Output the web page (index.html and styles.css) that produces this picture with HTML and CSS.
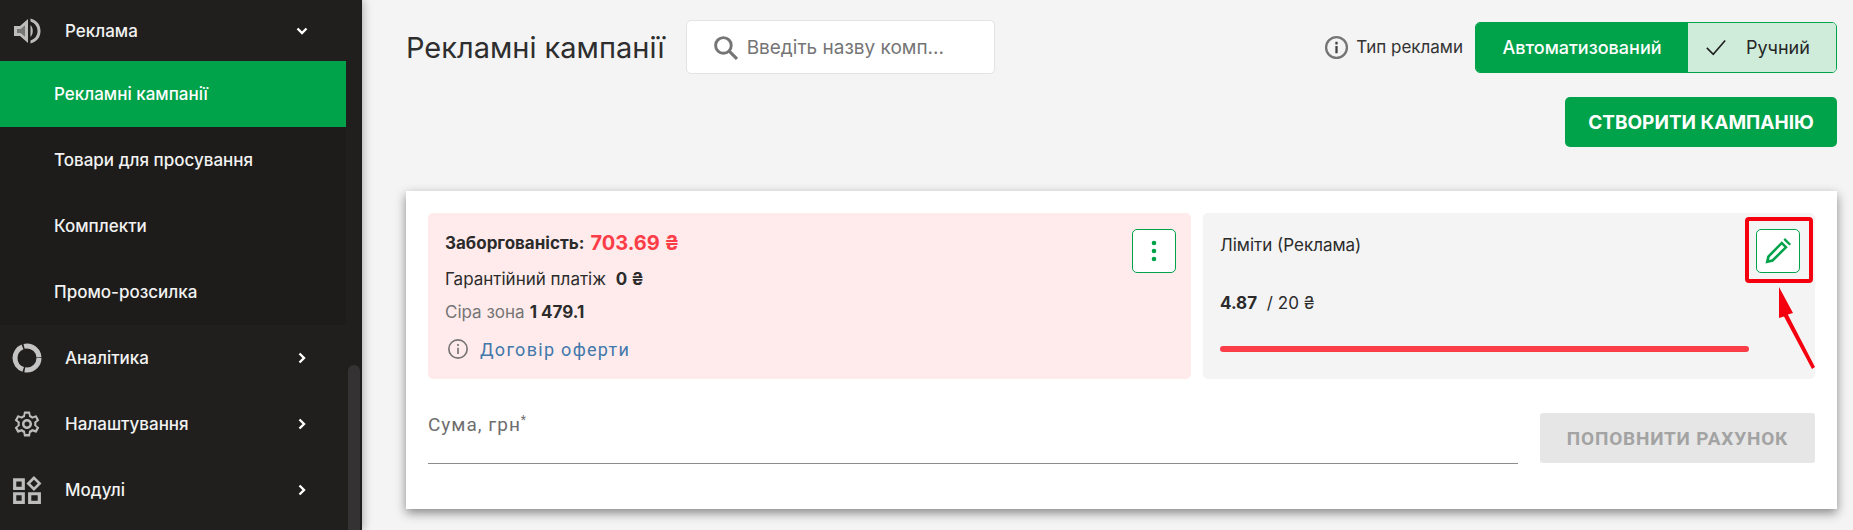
FILE: index.html
```html
<!DOCTYPE html>
<html lang="uk">
<head>
<meta charset="utf-8">
<title>Рекламні кампанії</title>
<link rel="stylesheet" href="styles.css">
</head>
<body>
<div class="page">
  <aside class="sidebar">
    <div class="side-menu">
      <div class="nav-row nav-top">
        <svg class="nav-icon" viewBox="0 0 30 30"><path d="M2 10h6l8-7v24l-8-7H2z M5 13v4h4l4 3.500V9.500L9 13z" fill="#bdbdbd" fill-rule="evenodd"/><path d="M5 13h4l4-3.500v11L9 17H5z" fill="#bdbdbd" opacity=".55"/><path d="M18.500 9c3 3 3 9 0 12z" fill="#bdbdbd"/><path d="M18.500 2.500c8 2 10 8 10 12.500s-2 10.500-10 12.500v-3c4.500-1.500 7-5 7-9.500s-2.500-8-7-9.500z" fill="#bdbdbd"/></svg>
        <span class="nav-label">Реклама</span>
        <svg class="nav-caret" viewBox="0 0 14 14"><path d="M2.500 4.500L7 9l4.500-4.500" fill="none" stroke="#fff" stroke-width="2.400"/></svg>
      </div>
      <div class="sub-menu">
        <div class="sub-row sub-active">Рекламні кампанії</div>
        <div class="sub-row">Товари для просування</div>
        <div class="sub-row">Комплекти</div>
        <div class="sub-row">Промо-розсилка</div>
      </div>
      <div class="nav-row">
        <svg class="nav-icon" viewBox="0 0 30 30"><circle cx="15" cy="15" r="12" fill="none" stroke="#c4c4c4" stroke-width="5" stroke-dasharray="21 1.600 29 1.600 21 1.600"/></svg>
        <span class="nav-label">Аналітика</span>
        <svg class="nav-caret" viewBox="0 0 14 14"><path d="M4.500 2.500L9 7l-4.500 4.500" fill="none" stroke="#fff" stroke-width="2.400"/></svg>
      </div>
      <div class="nav-row">
        <svg class="nav-icon" viewBox="0 0 24 24"><path fill="#bdbdbd" d="M19.430 12.980c.04-.32.070-.640.070-.980s-.030-.660-.070-.980l2.110-1.650c.190-.150.240-.420.120-.640l-2-3.460c-.120-.220-.390-.300-.610-.220l-2.490 1c-.520-.400-1.080-.730-1.690-.980l-.380-2.650C14.460 2.180 14.250 2 14 2h-4c-.250 0-.460.180-.490.420l-.380 2.650c-.610.250-1.170.590-1.690.980l-2.490-1c-.230-.090-.490 0-.610.220l-2 3.460c-.130.220-.070.490.120.640l2.110 1.650c-.040.320-.070.650-.070.980s.030.660.070.980l-2.110 1.650c-.190.150-.240.420-.120.640l2 3.460c.120.220.390.300.610.220l2.490-1c.520.400 1.080.730 1.690.980l.380 2.650c.030.240.240.420.490.420h4c.250 0 .460-.180.490-.420l.380-2.650c.610-.250 1.170-.590 1.690-.980l2.490 1c.230.090.490 0 .610-.220l2-3.460c.120-.220.070-.490-.120-.640l-2.110-1.650zM12 20l-1.200-.100-.500-2.600c-.900-.250-1.700-.700-2.400-1.400l-2.500.900-1.100-1.900 2-1.700c-.200-.900-.200-1.900 0-2.800l-2-1.700 1.100-1.900 2.500.900c.700-.700 1.500-1.150 2.400-1.400l.500-2.600h2.400l.500 2.600c.900.250 1.700.700 2.400 1.400l2.500-.900 1.100 1.900-2 1.700c.200.900.200 1.900 0 2.800l2 1.700-1.100 1.900-2.500-.900c-.700.700-1.500 1.150-2.400 1.400l-.500 2.600zM12 8c-2.200 0-4 1.800-4 4s1.800 4 4 4 4-1.800 4-4-1.800-4-4-4zm0 6c-1.100 0-2-.900-2-2s.900-2 2-2 2 .900 2 2-.900 2-2 2z"/></svg>
        <span class="nav-label">Налаштування</span>
        <svg class="nav-caret" viewBox="0 0 14 14"><path d="M4.500 2.500L9 7l-4.500 4.500" fill="none" stroke="#fff" stroke-width="2.400"/></svg>
      </div>
      <div class="nav-row">
        <svg class="nav-icon" viewBox="0 0 28 28"><path fill="#bdbdbd" fill-rule="evenodd" d="M1 3h11v11H1z M4 6v5h5V6z M1 16h11v11H1z M4 19v5h5v-5z M15 16h12v11H15z M18 19v5h6v-5z M20.500 1l7 7-7 7-7-7z M20.500 4.500L17 8l3.500 3.500L24 8z"/></svg>
        <span class="nav-label">Модулі</span>
        <svg class="nav-caret" viewBox="0 0 14 14"><path d="M4.500 2.500L9 7l-4.500 4.500" fill="none" stroke="#fff" stroke-width="2.400"/></svg>
      </div>
    </div>
    <div class="scroll-track"><div class="scroll-thumb"></div></div>
  </aside>
  <main class="main">
    <header class="head">
      <h1 class="title">Рекламні кампанії</h1>
      <div class="search">
        <svg class="search-icon" viewBox="0 0 24 24"><circle cx="10" cy="10" r="7.500" fill="none" stroke="#757575" stroke-width="2.800"/><path d="M15.500 15.500L23 23" stroke="#757575" stroke-width="3" fill="none"/></svg>
        <span class="search-text">Введіть назву комп...</span>
      </div>
      <div class="type">
        <svg class="info info-big" viewBox="0 0 24 24"><circle cx="12" cy="12" r="10" fill="none" stroke="#757575" stroke-width="2.200"/><path d="M12 10.500v7M12 6.500v2.500" stroke="#424242" stroke-width="2.200" fill="none"/></svg>
        <span class="type-text">Тип реклами</span>
      </div>
      <div class="toggle">
        <div class="toggle-on">Автоматизований</div>
        <div class="toggle-off">
          <svg class="check" viewBox="0 0 24 24"><path d="M2 13l7 7L22 5" fill="none" stroke="#212121" stroke-width="1.800"/></svg>
          <span>Ручний</span>
        </div>
      </div>
    </header>
    <div class="create-row"><button class="create">СТВОРИТИ КАМПАНІЮ</button></div>
    <section class="card">
      <div class="boxes">
        <div class="box box-red">
          <div class="box-lines">
            <div class="line line-debt"><b>Заборгованість:</b> <b class="debt">703.69 ₴</b></div>
            <div class="line line-guar">Гарантійний платіж <b>0 ₴</b></div>
            <div class="line line-gray"><span class="muted">Сіра зона</span> <b>1 479.1</b></div>
            <div class="line line-link">
              <svg class="info info-small" viewBox="0 0 24 24"><circle cx="12" cy="12" r="10" fill="none" stroke="#757575" stroke-width="1.800"/><path d="M12 10.500v7M12 6.500v2.200" stroke="#757575" stroke-width="1.800" fill="none"/></svg>
              <span class="link">Договір оферти</span>
            </div>
          </div>
          <div class="icon-btn">
            <svg class="dots" viewBox="0 0 6 22"><circle cx="3" cy="3" r="2.300" fill="#00a24a"/><circle cx="3" cy="11" r="2.300" fill="#00a24a"/><circle cx="3" cy="19" r="2.300" fill="#00a24a"/></svg>
          </div>
        </div>
        <div class="box box-gray">
          <div class="limit-top">
            <div class="limit-title">Ліміти (Реклама)</div>
            <div class="icon-btn">
              <svg class="pencil" viewBox="0 0 24 24"><path fill="#00a24a" fill-rule="evenodd" d="M0.500 23.500L2 16.500 15.500 3l5.500 5.500L7.500 22z M4.400 17.600L3.700 20.300l2.700-.700L17.800 8.500 15.500 6.200z"/><path fill="#00a24a" d="M17 1.500L18.500 0 24 5.500 22.500 7z"/></svg>
            </div>
          </div>
          <div class="limit-value"><b>4.87</b> / 20 ₴</div>
          <div class="limit-bar"></div>
        </div>
      </div>
      <div class="form-row">
        <div class="field"><span class="field-label">Сума, грн<sup class="req">*</sup></span></div>
        <button class="topup" disabled>ПОПОВНИТИ РАХУНОК</button>
      </div>
    </section>
  </main>
</div>
<div class="mark-rect"></div>
<svg class="mark-arrow" viewBox="0 0 44 84"><path d="M3 0L17 26 11.800 27.500 39 80 36 82 8 29.500 3 31z" fill="#f5000f"/></svg>
</body>
</html>
```

FILE: styles.css
```css
* { box-sizing: border-box; }
html, body { margin: 0; height: 100%; overflow: hidden; }
body { font-family: "Inter", "Noto Sans", sans-serif; color: #2b2b2b; background: #f4f4f4; }
.page { display: flex; height: 530px; }

.sidebar { width: 362px; flex: none; display: flex; background: #201f1d; position: relative; box-shadow: 2px 0 8px rgba(0,0,0,.25); z-index: 1; }
.side-menu { width: 346px; flex: none; }
.nav-row { height: 66px; display: flex; align-items: center; padding-left: 12px; color: #f2f2f2; }
.nav-top { height: 61px; }
.nav-icon { width: 30px; height: 30px; flex: none; }
.nav-label { font-size: 17px; font-weight: 500; margin-left: 23px; flex: 1; }
.nav-caret { width: 14px; height: 14px; margin-right: 37px; }
.sub-menu { background: #1d1c1a; }
.sub-row { height: 66px; display: flex; align-items: center; padding-left: 54px; font-size: 17px; font-weight: 500; color: #f2f2f2; }
.sub-active { background: #00a24a; color: #fff; }
.scroll-track { flex: 1; position: relative; }
.scroll-thumb { position: absolute; top: 365px; bottom: 0; left: 2px; width: 12px; border-radius: 6px 6px 0 0; background: #343233; }

.main { flex: 1; min-width: 0; padding: 20px 16px 0 44px; }
.head { display: flex; align-items: center; height: 54px; }
.title { margin: 0; font-size: 29px; font-weight: 400; color: #2e2e2e; white-space: nowrap; }
.search { width: 309px; height: 54px; margin-left: 21px; background: #fff; border: 1px solid #e3e3e3; border-radius: 5px; display: flex; align-items: center; padding-left: 26px; }
.search-icon { width: 25px; height: 25px; flex: none; }
.search-text { margin-left: 9px; font-size: 19px; color: #757575; white-space: nowrap; }
.type { margin-left: auto; display: flex; align-items: center; }
.info-big { width: 25px; height: 25px; }
.type-text { margin-left: 7px; font-size: 17px; color: #333; }
.toggle { margin-left: 12px; width: 362px; height: 51px; display: flex; border: 1px solid #00a24a; border-radius: 5px; overflow: hidden; }
.toggle-on { width: 212px; background: #00a24a; color: #fff; font-size: 18px; font-weight: 500; display: flex; align-items: center; justify-content: center; }
.toggle-off { flex: 1; background: #cfecda; display: flex; align-items: center; padding-left: 17px; font-size: 18px; color: #262626; gap: 19px; }
.check { width: 22px; height: 22px; }
.create-row { display: flex; justify-content: flex-end; margin-top: 23px; }
.create { width: 272px; height: 50px; border: 0; border-radius: 5px; background: #00a24a; color: #fff; font: 700 19px "Inter", "Noto Sans", sans-serif; padding: 0; }

.card { margin-top: 44px; background: #fff; padding: 22px 22px 45px; box-shadow: 0 4px 10px rgba(0,0,0,.45); }
.boxes { display: grid; grid-template-columns: 763fr 612fr; gap: 12px; }
.box { height: 166px; border-radius: 5px; padding: 16px 15px 0 17px; }
.box-red { background: #ffebeb; display: flex; justify-content: space-between; align-items: flex-start; }
.box-gray { background: #f4f4f4; }
.line { height: 28px; display: flex; align-items: center; gap: 5px; font-size: 17px; white-space: pre; }
.line-debt { gap: 6px; }
.line-guar { margin-top: 8px; }
.line-gray { margin-top: 5px; }
.line-link { margin-top: 9px; gap: 0; }
.debt { color: #fb3d48; font-size: 20px; font-weight: 700; }
.muted { color: #757575; }
.info-small { width: 22px; height: 22px; margin-left: 2px; }
.link { margin-left: 11px; color: #4178ab; font: 400 18px "Roboto", sans-serif; letter-spacing: 1.300px; }
.icon-btn { width: 44px; height: 44px; background: #fff; border: 1px solid #00a24a; border-radius: 5px; display: flex; align-items: center; justify-content: center; flex: none; }
.dots { width: 6px; height: 22px; }
.pencil { width: 26px; height: 26px; }
.limit-top { display: flex; justify-content: space-between; align-items: flex-start; }
.limit-title { margin-top: 2px; height: 28px; display: flex; align-items: center; font-size: 17px; }
.limit-value { margin-top: 16px; height: 28px; display: flex; align-items: center; gap: 5px; font-size: 17px; white-space: pre; }
.limit-bar { margin-top: 29px; width: 529px; height: 6px; border-radius: 3px; background: #fb3d48; }
.form-row { display: flex; align-items: flex-start; gap: 22px; margin-top: 34px; }
.field { flex: 1; height: 51px; border-bottom: 1px solid #8c8c8c; }
.field-label { font: 400 19px "Roboto", sans-serif; letter-spacing: 1px; color: #6e6e6e; display: block; }
.req { font-size: 12px; line-height: 0; }
.topup { width: 275px; height: 50px; border: 0; border-radius: 3px; background: #e6e6e6; color: #a3a3a3; font: 700 19px "Roboto", sans-serif; letter-spacing: .8px; padding: 0; }

.mark-rect { position: absolute; left: 1745px; top: 217px; width: 68px; height: 66px; border: 4px solid #f5000f; border-radius: 4px; }
.mark-arrow { position: absolute; left: 1776px; top: 287px; width: 44px; height: 84px; }
```
